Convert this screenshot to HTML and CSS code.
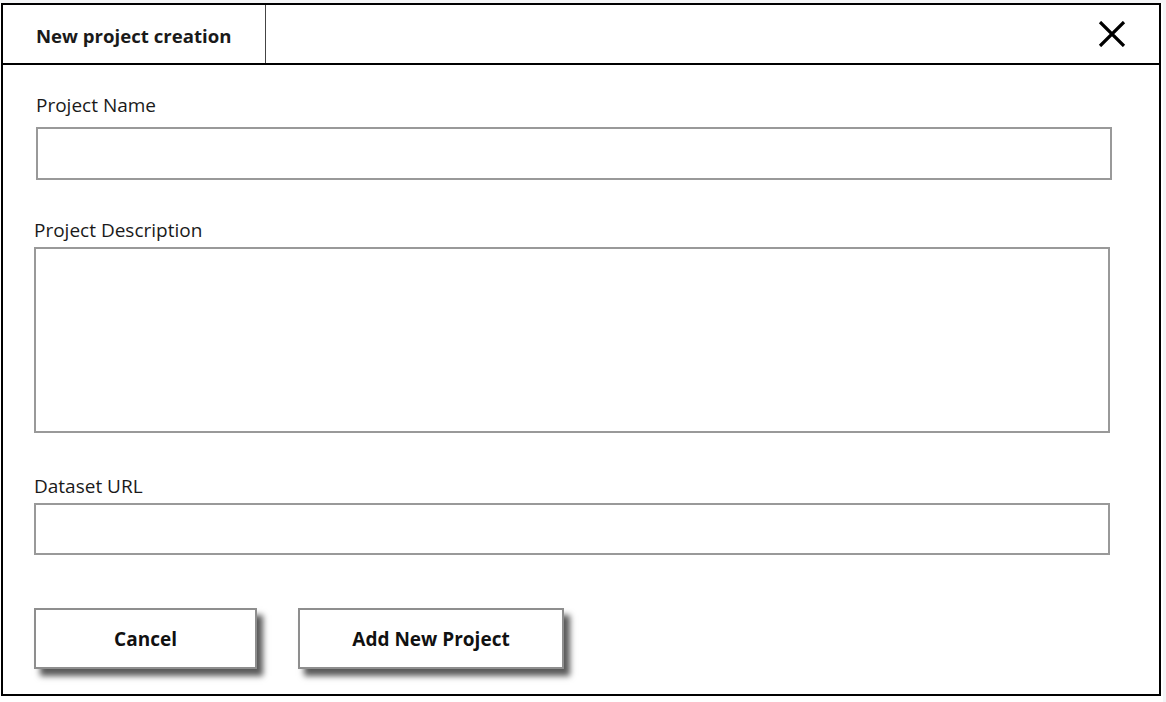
FILE: index.html
```html
<!DOCTYPE html>
<html>
<head>
<meta charset="utf-8">
<link rel="stylesheet" href="styles.css">
</head>
<body>
<div class="page">
  <div class="dialog">
    <div class="header">
      <div class="title">New project creation</div>
      <div class="close">
        <svg width="28" height="26" viewBox="0 0 28 26"><path d="M2 1 L26 25 M26 1 L2 25" stroke="#000" stroke-width="3.2" fill="none"/></svg>
      </div>
    </div>
    <div class="body">
      <div class="field first">
        <label class="label">Project Name</label>
        <div class="input"></div>
      </div>
      <div class="field second">
        <label class="label">Project Description</label>
        <div class="input area"></div>
      </div>
      <div class="field third">
        <label class="label">Dataset URL</label>
        <div class="input"></div>
      </div>
      <div class="actions">
        <button class="btn cancel">Cancel</button>
        <button class="btn add">Add New Project</button>
      </div>
    </div>
  </div>
</div>
</body>
</html>
```
FILE: styles.css
```css
html, body {
  margin: 0;
  padding: 0;
  background: #f4f5f7;
}
body {
  font-family: "Open Sans", "Noto Sans", sans-serif;
  color: #111;
}
.page {
  margin-top: 3px;
  width: 1163px;
  height: 699px;
  background: #fff;
  overflow: hidden;
}
.dialog {
  box-sizing: border-box;
  margin-left: 1px;
  width: 1160px;
  height: 693px;
  border: 2px solid #000;
  display: flex;
  flex-direction: column;
}
.header {
  height: 58px;
  border-bottom: 2px solid #000;
  display: flex;
  align-items: stretch;
  justify-content: space-between;
}
.title {
  width: 229px;
  padding-left: 33px;
  padding-top: 2px;
  box-sizing: content-box;
  border-right: 1px solid #444;
  display: flex;
  align-items: center;
  font-weight: 700;
  font-size: 18.6px;
  color: #1a1a1a;
}
.close {
  display: flex;
  align-items: center;
  padding-right: 33px;
}
.close svg { display: block; }
.body {
  display: flex;
  flex-direction: column;
}
.field {
  display: flex;
  flex-direction: column;
  width: 1076px;
}
.first { margin: 27px 0 0 33px; }
.second { margin: 37px 0 0 31px; }
.third { margin: 40px 0 0 31px; }
.label {
  box-sizing: border-box;
  padding-top: 1px;
  font-size: 19px;
  line-height: 24px;
  color: #1a1a1a;
  height: 35px;
}
.second .label { height: 30px; }
.third .label { height: 30px; }
.input {
  box-sizing: border-box;
  height: 53px;
  border: 2px solid #999;
  background: #fff;
}
.area { height: 186px; }
.third .input { height: 52px; }
.actions {
  display: flex;
  gap: 41px;
  margin: 53px 0 0 31px;
}
.btn {
  box-sizing: border-box;
  height: 61px;
  border: 2px solid #8e8e8e;
  background: #fff;
  font-family: "Open Sans", "Noto Sans", sans-serif;
  font-weight: 700;
  font-size: 19px;
  color: #111;
  box-shadow: 6px 7px 6px rgba(0, 0, 0, 0.65);
  padding: 0;
}
.cancel { width: 223px; }
.add { width: 266px; }
```
